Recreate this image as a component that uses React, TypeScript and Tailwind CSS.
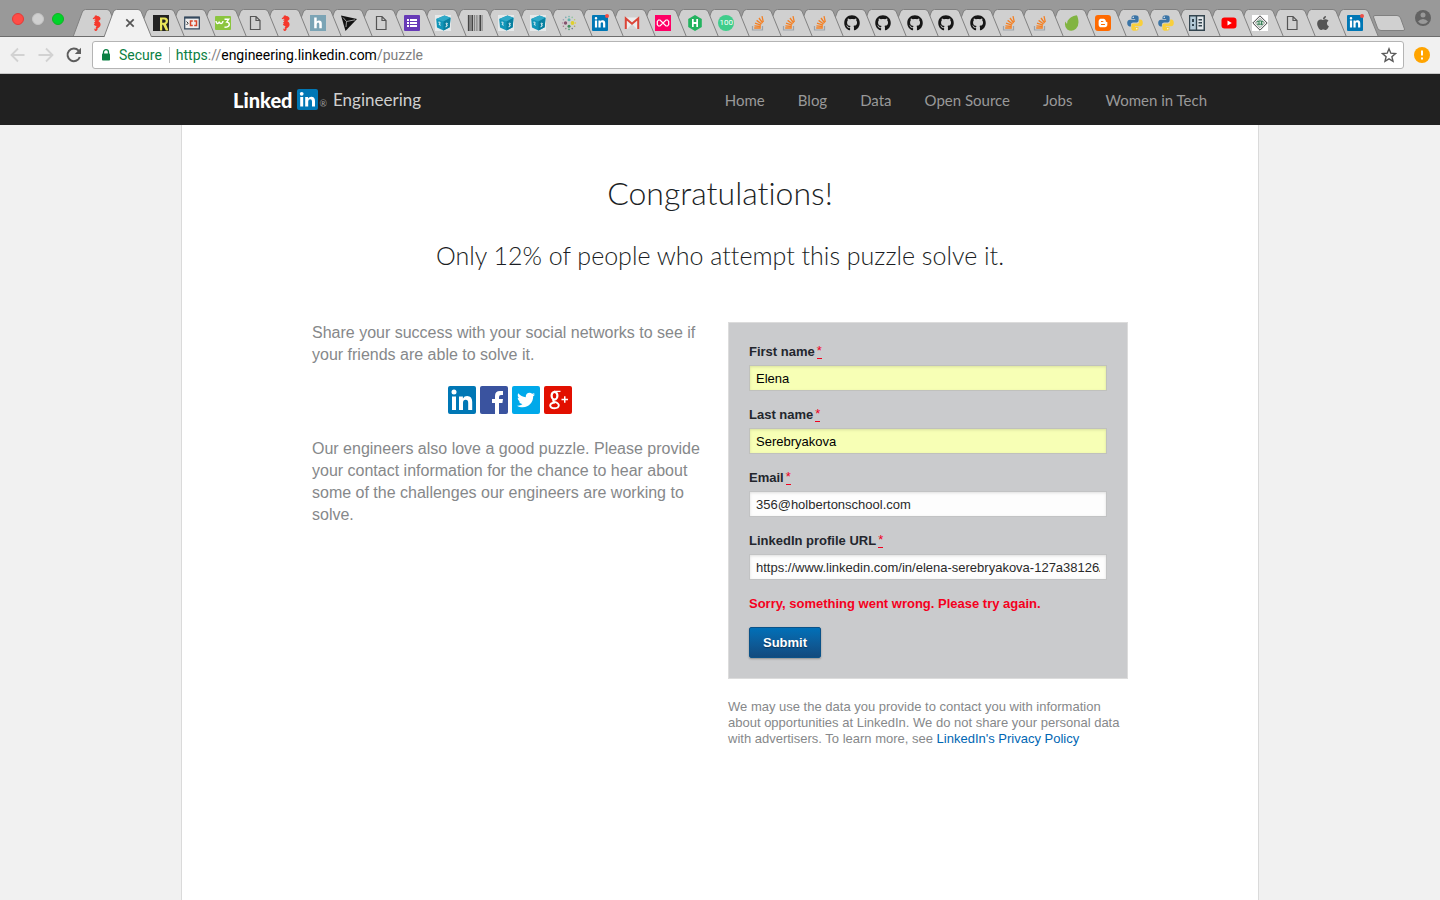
import React from "react";
import {
  FaApple,
  FaBloggerB,
  FaGithub,
  FaLinkedinIn,
  FaTwitter,
} from "react-icons/fa";

type TabKind =
  | "seahorse" | "active" | "r" | "intra" | "w3" | "doc" | "h" | "arrow" | "list" | "cube"
  | "barcode" | "dots" | "linkedin" | "gmail" | "pink" | "hacker" | "hundred" | "stack"
  | "github" | "leaf" | "blogger" | "python" | "book" | "youtube" | "diamond" | "apple";

const tabs: TabKind[] = [
  "seahorse", "active", "r", "intra", "w3", "doc", "seahorse", "h", "arrow", "doc", "list",
  "cube", "barcode", "cube", "cube", "dots", "linkedin", "gmail", "pink", "hacker", "hundred",
  "stack", "stack", "stack", "github", "github", "github", "github", "github", "stack", "stack",
  "leaf", "blogger", "python", "python", "book", "youtube", "diamond", "doc", "apple", "linkedin",
];

const svgProps = { viewBox: "0 0 16 16", className: "size-4", "aria-hidden": true } as const;

const dots: [number, number, string][] = [
  [8, 1.6, "#6fb7b0"], [11.2, 2.4, "#8ec5a0"], [13.6, 4.8, "#b6c96a"], [14.4, 8, "#e0cf45"],
  [13.6, 11.2, "#a8a06a"], [11.2, 13.6, "#6c7b8d"], [8, 14.4, "#4c9a78"], [4.8, 13.6, "#8a8a8a"],
  [2.4, 11.2, "#a87a8d"], [1.6, 8, "#b58fa6"], [2.4, 4.8, "#9aa0b5"], [4.8, 2.4, "#7aa9b5"],
];

function Favicon({ kind }: { kind: TabKind }) {
  switch (kind) {
    case "active":
      return (
        <svg {...svgProps}>
          <path d="M4.300 4.300l7.400 7.400M11.700 4.300l-7.400 7.400" stroke="#555" strokeWidth="1.700" />
        </svg>
      );
    case "seahorse":
      return (
        <svg {...svgProps}>
          <path
            fill="#f5382c"
            d="M7.200.2l1 .8 1.600.2 1.400 1.300.4 1.500-1 1.300-1.300.7 1.500 1.200.8 1.700-.3 2-1.300 1.500-1.600 1 .2 1-.9 1.400-1.400.2-1-1 .3-1.400.9-.2.200 1 .5-.5-.5-1.300.9-1.700-1.600-.2-1.200-1.100.9-.8-.6-1.700.9-.2.300-1.500-1.400.2L5.200 5l1.500-1-1.300-.3-1.400.5-.2-.9L5.500 2l.3-1.200z"
          />
        </svg>
      );
    case "r":
      return (
        <svg {...svgProps}>
          <path d="M0 0h16v16H0z" fill="#222" />
          <path d="M7 15.500V2.500h4.500q3.500 0 3.500 3.500 0 2.700-2 3.300l2.500 6.200h-2.700L10 9.800h-.8v5.700zm2.200-7.700H11q1.700 0 1.700-1.700T11 4.500H9.200z" fill="#e9e55a" fillRule="evenodd" />
        </svg>
      );
    case "intra":
      return (
        <svg {...svgProps}>
          <path d="M.7 2.200h14.600v11.600H.7z" fill="#eee" stroke="#34495e" strokeWidth="1.200" />
          <path d="M.5 1.800h15v1.800H.5z" fill="#34495e" />
          <path d="M2.500 6.500l1.700 1.700L2.500 10" stroke="#333" fill="none" />
          <path d="M8.800 6H6.500v4.500h2.300M10.200 6h2.300v4.500h-2.300" stroke="#d9482b" strokeWidth="1.500" fill="none" />
        </svg>
      );
    case "w3":
      return (
        <svg {...svgProps}>
          <rect y="1" width="16" height="14" rx="1" fill="#8bc53f" />
          <path d="M1 6q.3 2.500 1.600 2.500T4.200 6.500Q4.400 8.500 6 8.500T8 6M9.500 4.300h4.200l-2 2.800q2.600 0 2.600 2.300 0 2.600-4.800 2.800" stroke="#fff" strokeWidth="1.400" fill="none" />
        </svg>
      );
    case "doc":
      return (
        <svg {...svgProps}>
          <path d="M3.500 1.500H9L13 5.500v9H3.500zM9 1.500v4h4" fill="none" stroke="#555" strokeWidth="1.200" />
        </svg>
      );
    case "h":
      return (
        <svg {...svgProps}>
          <path d="M0 0h16v16H0z" fill="#7ba4b5" />
          <path d="M4.200 2.500h2.500v4q.8-1 2.300-1 2.800 0 2.800 3v4.700H9.300V9.200q0-1.600-1.200-1.600-1.400 0-1.400 1.800v3.800H4.200z" fill="#fff" />
        </svg>
      );
    case "arrow":
      return (
        <svg {...svgProps}>
          <path d="M0 .5L16 4 4.500 16z" fill="#111" />
          <path d="M2 2.500l3.500 4L14 4.800M5.500 6.500L5 12" stroke="#bbb" strokeWidth=".8" fill="none" />
        </svg>
      );
    case "list":
      return (
        <svg {...svgProps}>
          <rect width="16" height="16" rx="1" fill="#673ab7" />
          <path d="M3 4h2v2H3zm3 0H13v2H6zM3 7h2v2H3zm3 0H13v2H6zM3 10h2v2H3zm3 0H13v2H6z" fill="#fff" />
        </svg>
      );
    case "cube":
      return (
        <svg {...svgProps}>
          <path d="M0 0h16v16H0z" fill="#e6e9ea" />
          <path d="M1.200 4L9.500.5l6 2.300-.8 9.500-6.200 3.200-6.500-3z" fill="#1095b8" />
          <path d="M1.200 4L9.500.5l6 2.300L8.500 6.500z" fill="#2fa9c8" />
          <path d="M8.500 6.500l7-3.700-.8 9.500-6.200 3.200z" fill="#087f9f" />
          <path d="M3.400 7.200q1.900-.4 1.800.7l-1 1.700 1.500.6M10.700 8.500q1.800-1 1.700.2-.2 1-1.200 1.200 1.200-.1 1 .9-.4 1.100-1.700 1" stroke="#fff" strokeWidth=".9" fill="none" />
        </svg>
      );
    case "barcode":
      return (
        <svg {...svgProps}>
          <path d="M0 0h16v16H0z" fill="#bdbdbd" />
          <path d="M1 0h1.500v16H1zM4.500 0H6v16H4.500zM12.500 0H14v16h-1.500z" fill="#444" />
          <path d="M3 0h.8v16H3zM7 0h.8v16H7zM9.500 0h.8v16h-.8zM14.700 0h.7v16h-.7z" fill="#777" />
        </svg>
      );
    case "dots":
      return (
        <svg {...svgProps}>
          {dots.map(([x, y, c]) => (
            <circle key={`${x}-${y}`} cx={x} cy={y} r=".8" fill={c} />
          ))}
          <circle cx="8" cy="4.800" r="1.500" fill="#5fb3ad" />
          <circle cx="4.500" cy="8" r="1.700" fill="#84516e" />
          <circle cx="11.500" cy="8" r="1.900" fill="#dfd02e" />
          <circle cx="8" cy="11.300" r="1.500" fill="#3f8e5c" />
        </svg>
      );
    case "linkedin":
      return (
        <span className="relative flex size-4 items-center justify-center rounded-[1px] bg-[#0077b5] text-white">
          <FaLinkedinIn className="size-3" />
          <span className="absolute -top-px -right-px size-1 rounded-full bg-[#f04e45]" />
        </span>
      );
    case "gmail":
      return (
        <svg {...svgProps}>
          <path d="M1 2.500h14v11.500H1z" fill="#ececec" />
          <path d="M3 14l5-5 5 5z" fill="#d5d5d5" />
          <path d="M1.800 14V3.500L8 8.700l6.200-5.200V14" fill="none" stroke="#db4437" strokeWidth="2" />
        </svg>
      );
    case "pink":
      return (
        <svg {...svgProps}>
          <path d="M0 0h16v16H0z" fill="#ff0066" />
          <path d="M8 8L5 5H3.500L2.300 6.500v3L3.500 11H5l6-6h1.500l1.200 1.500v3L12.500 11H11z" fill="none" stroke="#fff" strokeWidth="1.200" />
        </svg>
      );
    case "hacker":
      return (
        <svg {...svgProps}>
          <path d="M8 0l6.800 4v8L8 16l-6.800-4V4z" fill="#23b35f" />
          <path d="M5 4h1.700v3h2.600V4H11v8H9.300V9H6.700v3H5z" fill="#fff" />
        </svg>
      );
    case "hundred":
      return (
        <span className="flex size-4 items-center justify-center rounded-full bg-[#3fcd8b] font-['Roboto',sans-serif] text-[8px] leading-none text-white">
          100
        </span>
      );
    case "stack":
      return (
        <svg {...svgProps}>
          <path d="M2.500 11v4h10v-4" fill="none" stroke="#9da3aa" strokeWidth="1.200" />
          <path d="M4.200 13h6.600M4.400 10.800l6.400.7M5 8.200l6 1.900M6.600 5.400l5 3.600M9 3l3.600 5M12 1.200l1.300 6" stroke="#f48024" strokeWidth="1.300" />
        </svg>
      );
    case "github":
      return <FaGithub className="size-4 text-[#151515]" />;
    case "leaf":
      return (
        <svg {...svgProps}>
          <path d="M12.700.3Q6 1.500 3.500 6L3 9 1.300 6.500Q0 12 3.300 14.500q4.500 3 8.700-.7 3.600-3.800 2-10.300Q13.600 1 12.700.3z" fill="#81b441" />
        </svg>
      );
    case "blogger":
      return (
        <span className="flex size-4 items-center justify-center rounded-[3px] bg-[#ff6a00] text-white">
          <FaBloggerB className="size-2.5" />
        </span>
      );
    case "python":
      return (
        <svg {...svgProps}>
          <path d="M8 .2c-3 0-3.500 1-3.500 2.300V4H8.200v.7H3C1 4.700.2 6.200.2 8s.8 3.400 2.300 3.400h1.400V9.600c0-1.300 1-2.200 2.200-2.200h3.600c1.100 0 1.900-.8 1.900-1.900v-3C11.600 1 10.500.2 8 .2z" fill="#3a74a6" />
          <path d="M8 15.800c3 0 3.500-1 3.500-2.300V12H7.800v-.7H13c2 0 2.800-1.500 2.800-3.300s-.8-3.400-2.300-3.400h-1.400v1.800c0 1.300-1 2.200-2.200 2.200H6.300c-1.100 0-1.900.8-1.900 1.900v3c0 1.500 1.100 2.300 3.600 2.300z" fill="#f8cf3c" />
          <circle cx="6.200" cy="2.300" r=".7" fill="#fff" />
          <circle cx="9.800" cy="13.700" r=".7" fill="#fff" />
        </svg>
      );
    case "book":
      return (
        <svg {...svgProps}>
          <path d="M0 0h16v16H0z" fill="#33454f" />
          <path d="M1.200 1.500h5.600v13H1.200z" fill="#b5cbd8" />
          <path d="M8.200 1.500h6.300v13H8.200z" fill="#e3e8eb" />
          <path d="M3 4h2v3H3zM3 9h2v2H3zM9.500 4h3.500v1.500H9.500zM9.500 7h3.500v1.500H9.500zM9.500 10h3.500v1.500H9.500z" fill="#33454f" />
        </svg>
      );
    case "youtube":
      return (
        <svg {...svgProps}>
          <rect x=".5" y="2.500" width="15" height="11" rx="3" fill="#f00" />
          <path d="M6.500 5.500v5L10.800 8z" fill="#fff" />
        </svg>
      );
    case "diamond":
      return (
        <svg {...svgProps}>
          <path d="M0 0h16v16H0z" fill="#fff" />
          <path d="M8 .8L15.200 8 8 15.200.8 8z" fill="#f2f2f2" stroke="#444" />
          <path d="M8 3.300L12.700 8 8 12.700 3.300 8z" fill="#d8e5dc" stroke="#777" strokeWidth=".6" />
          <path d="M4.500 7q3.500-2.500 7 0M5 9.200h6M7 6v4M9.500 6v4" stroke="#3c8159" fill="none" />
        </svg>
      );
    case "apple":
      return <FaApple className="size-4 text-[#555]" />;
  }
}

function Tab({ kind, order }: { kind: TabKind; order: number }) {
  const active = kind === "active";
  return (
    <button
      type="button"
      aria-label={`Tab ${order + 1}`}
      className={
        active
          ? "relative mr-px flex h-7 min-w-0 flex-1 items-center justify-center"
          : "relative flex h-7 min-w-0 flex-1 items-center justify-center"
      }
      style={{ zIndex: active ? 60 : 50 - order }}
    >
      <svg
        viewBox="0 0 48 28"
        aria-hidden="true"
        className="absolute left-1/2 h-7 w-12 max-w-none -translate-x-1/2"
      >
        <path
          d="M0 28L9.300 3Q10.300.5 12.500.5H34Q36.300.5 37.300 3L47.500 28"
          fill={active ? "#f1f1f1" : "#d0d0d0"}
          stroke="#808080"
        />
        {!active && <path d="M0 27.500H48" stroke="#6d6d6d" />}
      </svg>
      <span className={active ? "relative flex pl-1" : "relative flex"}>
        <Favicon kind={kind} />
      </span>
    </button>
  );
}

function BrowserChrome() {
  return (
    <div className="font-['Roboto',sans-serif]">
      <div className="flex h-[37px] items-end border-b border-[#6d6d6d] bg-[#999]">
        <div className="flex w-[81px] shrink-0 gap-2 self-stretch pt-[13px] pl-3">
          <button type="button" aria-label="Close window" className="size-3 rounded-full border border-[#e23b38] bg-[#ff4c46]" />
          <button type="button" aria-label="Minimize window" className="size-3 rounded-full border border-[#c4c4c4] bg-[#d0d0d0]" />
          <button type="button" aria-label="Zoom window" className="size-3 rounded-full border border-[#10b323] bg-[#00d42a]" />
        </div>
        <nav aria-label="Tabs" className="-mb-px flex min-w-0 flex-1">
          {tabs.map((kind, i) => (
            <Tab key={i} kind={kind} order={i} />
          ))}
        </nav>
        <div className="flex w-[70px] shrink-0 items-center justify-between self-stretch pr-[9px] pl-0.5">
          <button type="button" aria-label="New tab" className="mt-2.5">
            <svg viewBox="0 0 34 16" className="h-4 w-[34px]" aria-hidden="true">
              <path d="M3 .5H25q2.500 0 3.500 2.500l4 11q.5 1.500-1.500 1.500H9q-2.500 0-3.500-2.500L1.500 2Q1.300.5 3 .5z" fill="#d0d0d0" stroke="#808080" />
            </svg>
          </button>
          <button type="button" aria-label="Profile">
            <svg viewBox="0 0 16 16" className="size-4" aria-hidden="true">
              <circle cx="8" cy="8" r="8" fill="#636363" />
              <circle cx="8" cy="5" r="2.500" fill="#999" />
              <path d="M3 11.500Q5 9 8 9t5 2.500Q11 14 8 14t-5-2.500z" fill="#999" />
            </svg>
          </button>
        </div>
      </div>
      <div className="flex h-[37px] items-center border-b border-[#c8c8c8] bg-[#f1f1f1] pr-2.5 pl-2.5">
        <div className="flex w-[82px] shrink-0 gap-3">
          <button type="button" aria-label="Back">
            <svg viewBox="0 0 16 16" className="size-4" fill="none" stroke="#d2d2d2" strokeWidth="1.800" aria-hidden="true">
              <path d="M14.500 8H1.500M8 1.500L1.500 8 8 14.500" />
            </svg>
          </button>
          <button type="button" aria-label="Forward">
            <svg viewBox="0 0 16 16" className="size-4" fill="none" stroke="#d2d2d2" strokeWidth="1.800" aria-hidden="true">
              <path d="M.5 8h13M8 1.500L14.500 8 8 14.500" />
            </svg>
          </button>
          <button type="button" aria-label="Reload">
            <svg viewBox="0 0 16 16" className="size-4" aria-hidden="true">
              <path d="M13.800 10A6.300 6.300 0 1 1 12.600 3.700L14 5.200" fill="none" stroke="#5d5d5d" strokeWidth="2" />
              <path d="M15 .8v6.200H8.800z" fill="#5d5d5d" />
            </svg>
          </button>
        </div>
        <div className="flex h-7 min-w-0 flex-1 items-center rounded-[3px] border border-[#b4b4b4] bg-white px-2 text-[14px] leading-5">
          <svg viewBox="0 0 10 12" className="h-3 w-2.5 shrink-0" aria-hidden="true">
            <path d="M2.500 5V3.200a2.500 2.500 0 0 1 5 0V5" fill="none" stroke="#0b8043" strokeWidth="1.300" />
            <rect x="1" y="4.500" width="8" height="7" rx=".8" fill="#0b8043" />
          </svg>
          <span className="ml-2 border-r border-[#bbb] pr-[7px] leading-4 text-[#0b8043]">Secure</span>
          <span className="ml-1.5 flex-1 truncate text-black">
            <span className="text-[#0b8043]">https</span>
            <span className="text-[#808080]">://</span>engineering.linkedin.com
            <span className="text-[#808080]">/puzzle</span>
          </span>
          <button type="button" aria-label="Bookmark this page">
            <svg viewBox="0 0 16 16" className="-mr-0.5 size-4" aria-hidden="true">
              <path d="M8 1.800l1.800 4.400 4.700.4-3.600 3.100 1.100 4.600L8 11.800l-4 2.500 1.100-4.600L1.500 6.600l4.700-.4z" fill="none" stroke="#5a5a5a" strokeWidth="1.400" />
            </svg>
          </button>
        </div>
        <button type="button" aria-label="Update available" className="ml-2.5">
          <svg viewBox="0 0 16 16" className="size-4" aria-hidden="true">
            <circle cx="8" cy="8" r="8" fill="#ffa400" />
            <path d="M7 3.500h2v5H7zM7 10.500h2v2H7z" fill="#fff" />
          </svg>
        </button>
      </div>
    </div>
  );
}

const navItems = ["Home", "Blog", "Data", "Open Source", "Jobs", "Women in Tech"];

function SiteHeader() {
  return (
    <header className="bg-[#212121] font-['Lato',sans-serif]">
      <div className="mx-auto flex h-[51px] max-w-[974px] items-center justify-between">
        <a href="#home" className="flex items-center">
          <span className="text-[20px] leading-6 font-black text-white">Linked</span>
          <span className="ml-1 flex size-[21px] items-center justify-center rounded-[2px] bg-[#0077b5]">
            <svg viewBox="0 0 21 21" className="size-[21px]" aria-hidden="true">
              <circle cx="4.700" cy="4.800" r="1.900" fill="#fff" />
              <path d="M3.200 8h3v9.500h-3zM8.200 8h2.900v1.400q1-1.700 3.100-1.700 3.800 0 3.800 4.300v5.500h-3v-5q0-2.200-1.800-2.200-2 0-2 2.300v4.900h-3z" fill="#fff" />
            </svg>
          </span>
          <span className="mt-2 ml-0.5 text-[9px] leading-3 text-[#999]">®</span>
          <span className="ml-1.5 text-[17px] leading-6 text-[#cfcfcf]">Engineering</span>
        </a>
        <nav aria-label="Main" className="flex gap-[33px] text-[15px] leading-5 text-[#999]">
          {navItems.map((item) => (
            <a key={item} href="#nav">{item}</a>
          ))}
        </nav>
      </div>
    </header>
  );
}

function Field({ id, label, value, filled }: { id: string; label: string; value: string; filled?: boolean }) {
  return (
    <div className="mb-4">
      <label htmlFor={id} className="flex h-[21px] items-start text-[13px] leading-4 font-bold text-[#23262d]">
        {label}
        <abbr title="required" className="ml-0.5 border-b border-dashed border-[#f0001e] leading-[14px] font-normal text-[#f0001e] no-underline">*</abbr>
      </label>
      <input
        id={id}
        type="text"
        defaultValue={value}
        className={
          filled
            ? "block h-[26px] w-full border border-[#c0c1bd] bg-[#f7ffb5] px-1.5 text-[13px] text-black shadow-[inset_0_1px_3px_rgba(0,0,0,0.12)]"
            : "block h-[26px] w-full border border-[#c2c3c4] bg-[#fdfdfd] px-1.5 text-[13px] text-[#2a2a2a] shadow-[inset_0_1px_3px_rgba(0,0,0,0.12)]"
        }
      />
    </div>
  );
}

function ShareLinks() {
  return (
    <div className="flex justify-center gap-1 text-white">
      <a href="#linkedin" aria-label="LinkedIn" className="flex size-7 items-center justify-center rounded-[2px] bg-[#0077b5]">
        <svg viewBox="0 0 28 28" className="size-7" aria-hidden="true">
          <circle cx="6" cy="6" r="2.500" fill="#fff" />
          <path d="M4 10.500h4V24H4zM11 10.500h3.900v2q1.300-2.400 4.300-2.400 5 0 5 6V24h-4v-7q0-3.300-2.500-3.300-2.700 0-2.700 3.300v7h-4z" fill="#fff" />
        </svg>
      </a>
      <a href="#facebook" aria-label="Facebook" className="flex size-7 items-center justify-center rounded-[2px] bg-[#3a539f]">
        <svg viewBox="0 0 28 28" className="size-7" aria-hidden="true">
          <path d="M15 28V17h-3v-4h3v-3q0-5 5-5h3v4h-2q-2 0-2 2v2h4l-.6 4H19v11z" fill="#fff" />
        </svg>
      </a>
      <a href="#twitter" aria-label="Twitter" className="flex size-7 items-center justify-center rounded-[2px] bg-[#00a9ea]">
        <FaTwitter className="size-[18px]" />
      </a>
      <a href="#google-plus" aria-label="Google Plus" className="flex size-7 items-center justify-center rounded-[2px] bg-[#e20f00]">
        <svg viewBox="0 0 28 28" className="size-7" fill="none" stroke="#fff" aria-hidden="true">
          <ellipse cx="10.500" cy="9.700" rx="2.900" ry="3.900" strokeWidth="2.200" />
          <path d="M10 5.400h6.500" strokeWidth="1.300" />
          <path d="M10 13.500q-2 1.300.5 2.300 4.500 1.200 4.300 3.700-.3 2.700-4.300 2.700-4.200 0-4.300-2.700 0-2.500 4.800-3" strokeWidth="1.900" />
          <path d="M17.500 13.500H24M20.750 10.200v6.600" strokeWidth="1.500" />
        </svg>
      </a>
    </div>
  );
}

export default function App() {
  return (
    <div className="flex min-h-screen flex-col bg-[#f1f1f1]">
      <BrowserChrome />
      <SiteHeader />
      <main className="mx-auto w-full max-w-[1078px] flex-1 border-x border-[#dadada] bg-white px-4 pb-16">
        <div className="mx-auto max-w-[816px] font-['Liberation_Sans',Arial,sans-serif]">
          <div className="pt-12 text-center font-['Lato',sans-serif] font-light text-[#1b1e24] [font-variant-ligatures:none]">
            <h1 className="text-[32px] leading-10">Congratulations!</h1>
            <h2 className="mt-[26px] text-[25px] leading-8">Only 12% of people who attempt this puzzle solve it.</h2>
          </div>
          <div className="mt-[51px] grid grid-cols-2 gap-x-5 md:grid-cols-[1fr_400px]">
            <section className="text-[16px] leading-[22px] text-[#86888a]">
              <p className="mb-5">Share your success with your social networks to see if your friends are able to solve it.</p>
              <ShareLinks />
              <p className="mt-6">
                Our engineers also love a good puzzle. Please provide your contact information for the chance to hear
                about some of the challenges our engineers are working to solve.
              </p>
            </section>
            <section>
              <form className="border border-[#dcdcdc] bg-[#cacbcd] px-5 pt-[21px] pb-5" onSubmit={(e) => e.preventDefault()}>
                <Field id="first" label="First name" value="Elena" filled />
                <Field id="last" label="Last name" value="Serebryakova" filled />
                <Field id="email" label="Email" value="356@holbertonschool.com" />
                <Field id="profile" label="LinkedIn profile URL" value="https://www.linkedin.com/in/elena-serebryakova-127a38126/" />
                <p className="text-[13px] leading-4 font-bold text-[#f5001d]">Sorry, something went wrong. Please try again.</p>
                <button
                  type="submit"
                  className="mt-[15px] block h-[31px] rounded-[2px] border border-[#0b5288] bg-linear-to-b from-[#0070b8] to-[#114a7e] px-[13px] text-[13px] leading-4 font-bold text-white shadow-[0_1px_2px_rgba(0,0,0,0.3)] text-shadow-[0_1px_1px_rgba(0,0,0,0.4)]"
                >
                  Submit
                </button>
              </form>
              <p className="mt-5 text-[13px] leading-4 text-[#86888a]">
                We may use the data you provide to contact you with information about opportunities at LinkedIn. We do
                not share your personal data with advertisers. To learn more, see{" "}
                <a href="#privacy" className="text-[#0066b3]">LinkedIn's Privacy Policy</a>
              </p>
            </section>
          </div>
        </div>
      </main>
    </div>
  );
}
